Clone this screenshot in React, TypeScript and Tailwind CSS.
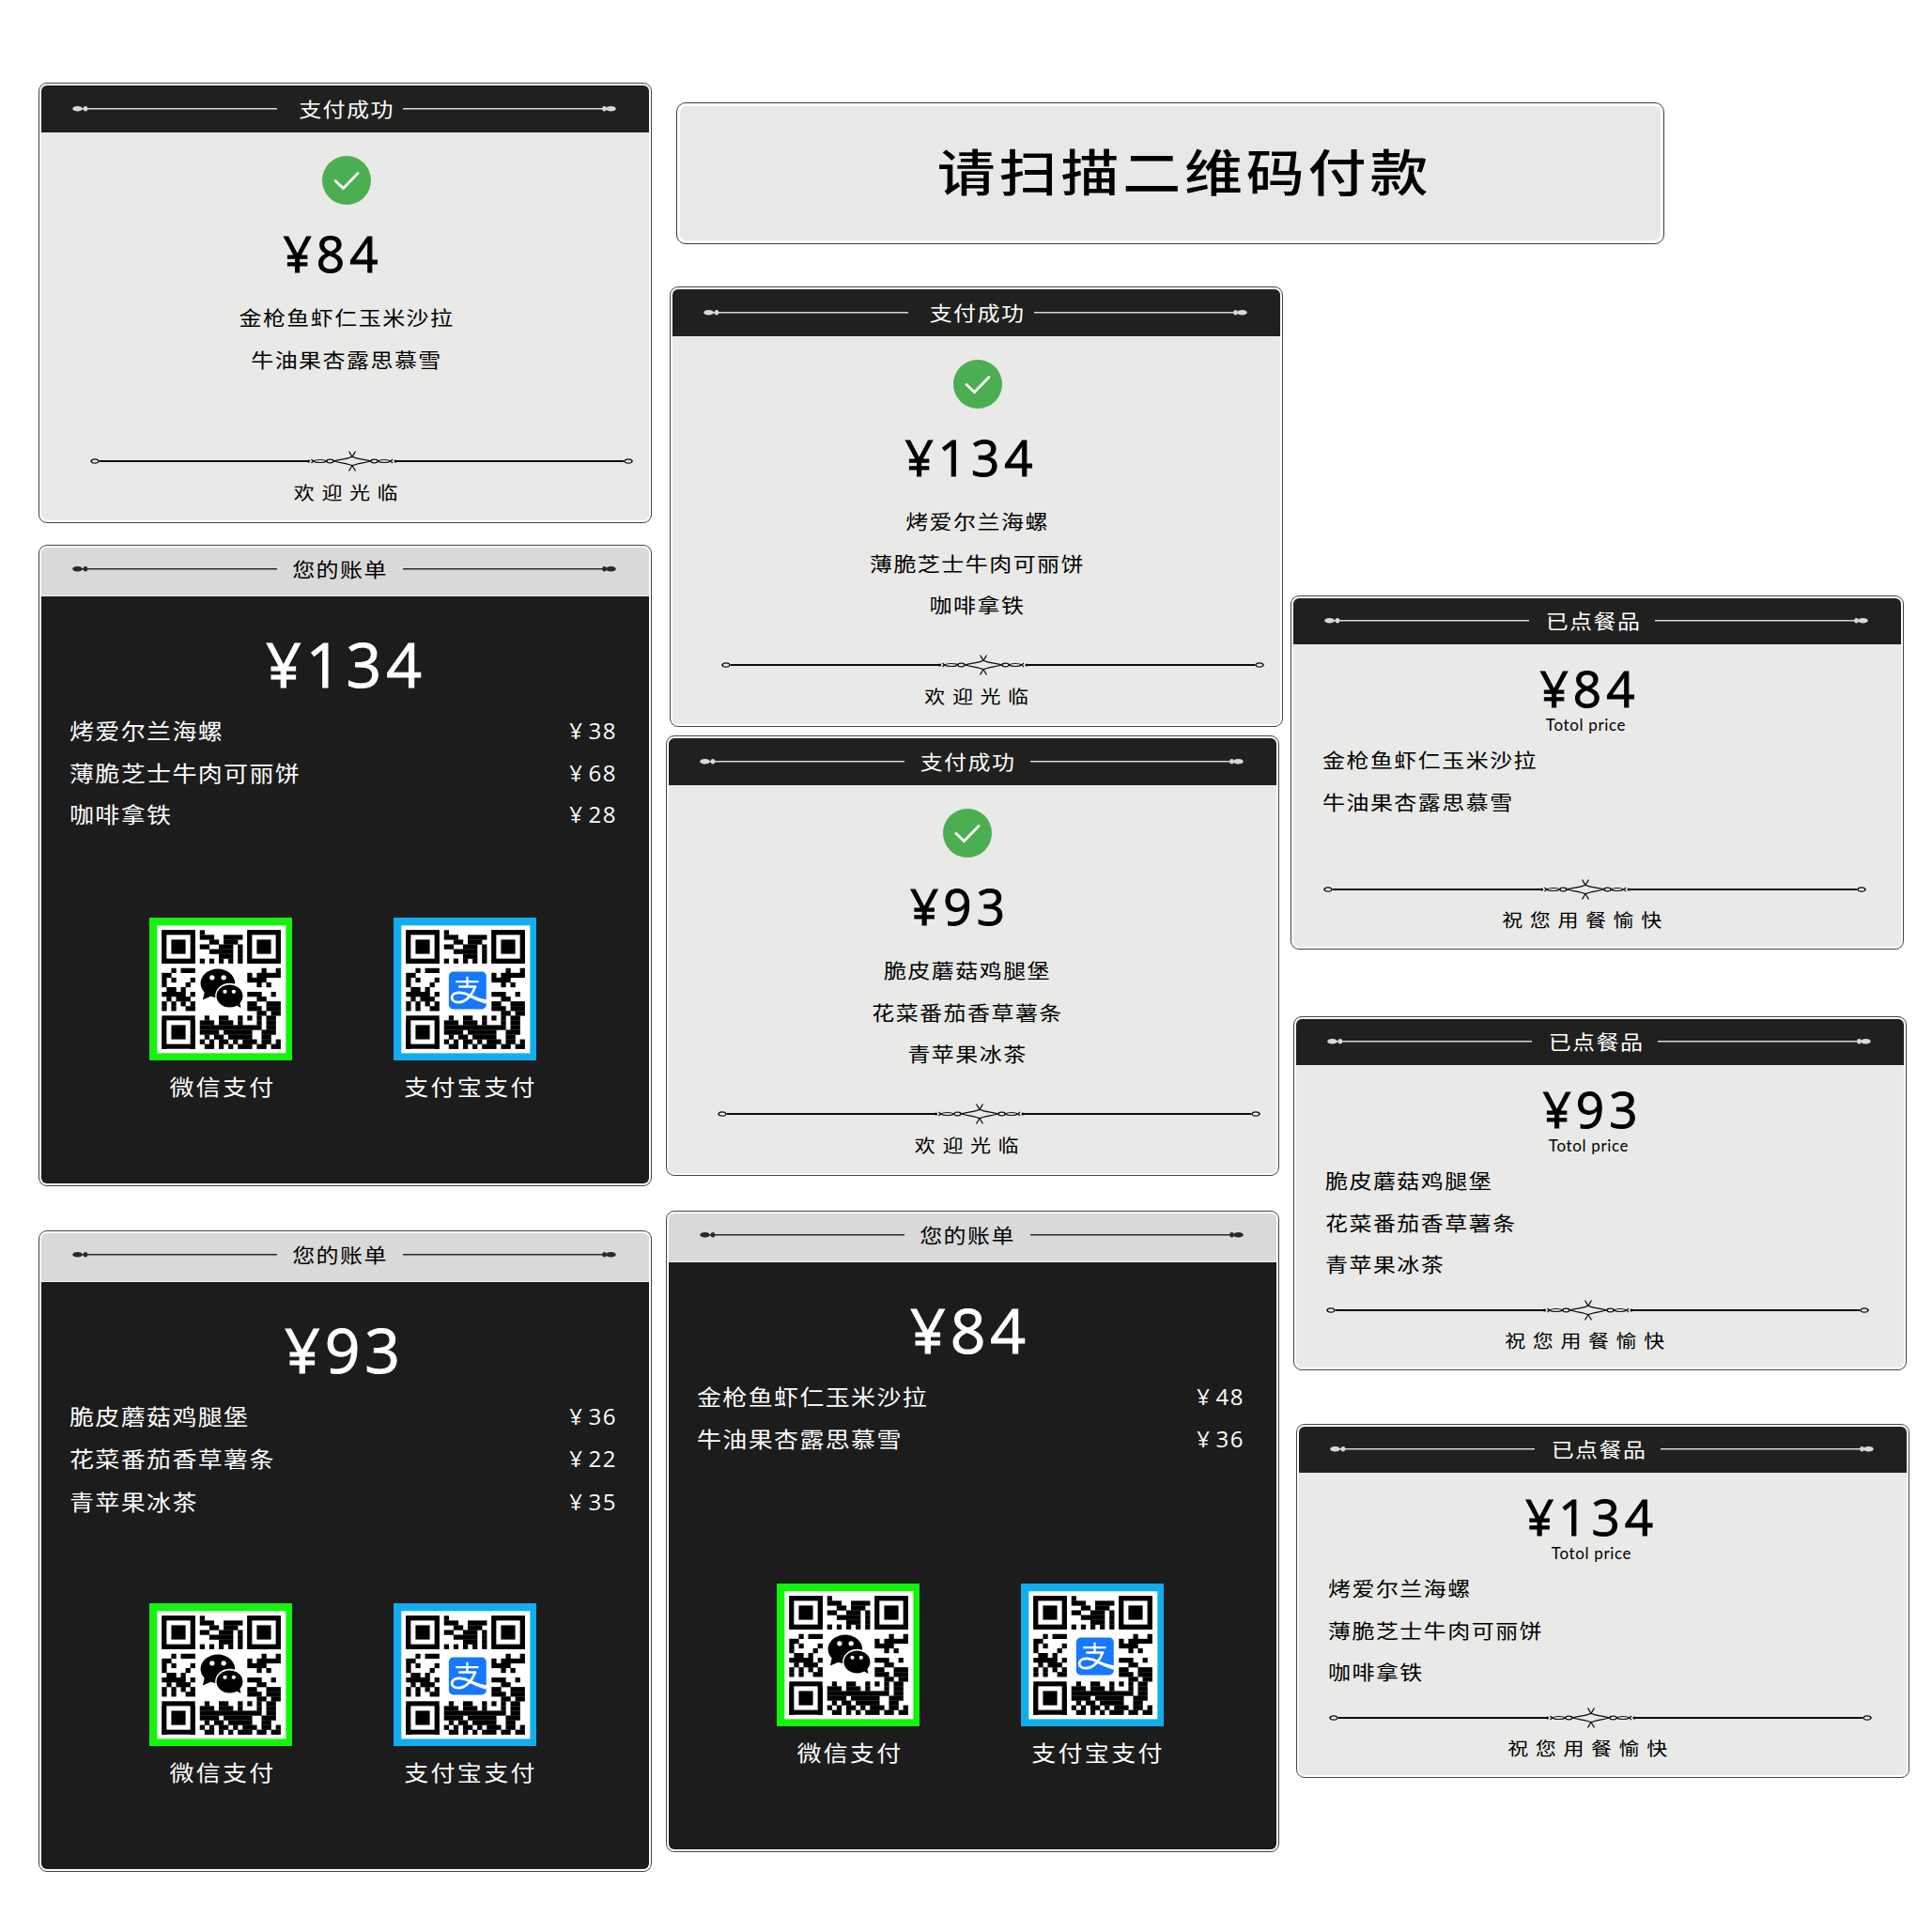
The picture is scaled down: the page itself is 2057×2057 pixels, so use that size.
import React from "react";

const CJK = "font-['Noto_Sans_CJK_SC',sans-serif]";
const NUM = "font-['Open_Sans','Noto_Sans_CJK_SC',sans-serif]";

const QR_ROWS = [
  "1111111010000000001111111",
  "1000001011100111101000001",
  "1011101000110111001011101",
  "1011101011001110101011101",
  "1011101000111110101011101",
  "1000001000001110101000001",
  "1111111010101010101111111",
  "0000000000000000000000000",
  "0010111000000000000001001",
  "1100000000000000001011111",
  "1010001000000000001111000",
  "1000010000000000000010100",
  "0110100000000000000000000",
  "1111101000000000001110010",
  "0101110000000000000011000",
  "1010101000000000001100111",
  "1010011000000000001110111",
  "0000000000000000000011011",
  "0000000001001100101010110",
  "1111111011101110100010110",
  "1000001011111111111110110",
  "1011101011110111111001110",
  "1011101001011011111001100",
  "1011101010101101011101101",
  "1000001001101010111011011",
];

function WeChatMark() {
  return (
    <g>
      <path d="M205 272 L199 298 L226 286 Z" fill="#000" />
      <ellipse cx="247" cy="245" rx="55" ry="46" fill="#000" />
      <circle cx="229" cy="227" r="8" fill="#fff" />
      <circle cx="266" cy="227" r="8" fill="#fff" />
      <ellipse cx="285" cy="286" rx="46" ry="41" fill="#fff" />
      <ellipse cx="285" cy="286" rx="42" ry="36" fill="#000" />
      <path d="M302 312 L321 324 L316 300 Z" fill="#000" />
      <circle cx="270" cy="272" r="6.5" fill="#fff" />
      <circle cx="298" cy="272" r="6.5" fill="#fff" />
    </g>
  );
}

function AlipayMark() {
  return (
    <g>
      <rect x="190" y="196" width="150" height="148" fill="#fff" />
      <rect x="205" y="208" width="120" height="120" rx="14" fill="#1677ff" />
      <g fill="none" stroke="#fff" strokeWidth="7">
        <path d="M227 240 H300 M264 224 V256 M236 256 H293" />
        <path d="M290 255 C282 278 262 306 236 306 C218 306 211 294 217 284 C226 270 252 274 276 286 C294 295 310 300 325 303" strokeWidth="8" />
      </g>
      <path d="M278 284 C294 291 310 295 325 297 V311 C306 306 290 299 272 290 Z" fill="#fff" />
    </g>
  );
}

function QrCode({ kind }: { kind: "wechat" | "alipay" }) {
  const cell = 15.2;
  return (
    <svg viewBox="28 35 457 457" className="block h-[152px] w-[152px]">
      <rect x="28" y="35" width="457" height="457" fill={kind === "wechat" ? "#12f50a" : "#10aeef"} />
      <rect x="53" y="60" width="412" height="409" fill="#fff" />
      {QR_ROWS.map((row, y) =>
        (row.match(/1+|0+/g) || []).reduce<{ x: number; out: React.ReactNode[] }>(
          (acc, run) => {
            if (run[0] === "1") {
              acc.out.push(
                <rect key={`${y}-${acc.x}`} x={68 + acc.x * cell} y={75 + y * cell} width={run.length * cell + 0.6} height={cell + 0.6} fill="#000" />,
              );
            }
            acc.x += run.length;
            return acc;
          },
          { x: 0, out: [] },
        ).out,
      )}
      {/* finder squares */}
      {[
        [0, 0],
        [18, 0],
        [0, 18],
      ].map(([cx, cy]) => (
        <g key={`${cx}-${cy}`}>
          <rect x={68 + cx * cell} y={75 + cy * cell} width={cell * 7} height={cell * 7} fill="#000" />
          <rect x={68 + (cx + 1) * cell} y={75 + (cy + 1) * cell} width={cell * 5} height={cell * 5} fill="#fff" />
          <rect x={68 + (cx + 2) * cell} y={75 + (cy + 2) * cell} width={cell * 3} height={cell * 3} fill="#000" />
        </g>
      ))}
      {kind === "wechat" ? <WeChatMark /> : <AlipayMark />}
    </svg>
  );
}

function Rule({ flip, light, width }: { flip?: boolean; light?: boolean; width: number }) {
  const c = light ? "#d8d8d6" : "#2a2a2a";
  return (
    <svg width={width} height="8" viewBox={`0 0 ${width} 8`} className={flip ? "shrink-0 -scale-x-100" : "shrink-0"}>
      <ellipse cx="5.5" cy="3.7" rx="5.3" ry="2.8" fill={c} />
      <ellipse cx={flip ? 12.5 : 14} cy="3.7" rx="2.3" ry="2.7" fill={c} />
      <rect x="10" y="3" width={width - 10} height="1.5" fill={c} />
    </svg>
  );
}

function Ornament() {
  return (
    <svg width="578" height="28" viewBox="0 0 578 28" fill="none" stroke="#0c0c0c" strokeWidth="1.2">
      <ellipse cx="5" cy="14" rx="3.8" ry="2.2" />
      <path d="M0 14 H1.5 M8.5 14 H12" />
      <path d="M10 14 H233 M325 14 H568" strokeWidth="1.8" />
      <circle cx="232.500" cy="14" r="1" fill="#151515" />
      <circle cx="325" cy="14" r="1" fill="#151515" />
      <path d="M235.500 12 L237.500 14 L235.500 16 M322 12 L320 14 L322 16" />
      <path d="M237 14 C241 12 249 12 252 14 C249 16 241 16 237 14 Z" />
      <ellipse cx="255.500" cy="14" rx="3.600" ry="1.8" />
      <ellipse cx="302.500" cy="14" rx="3.600" ry="1.8" />
      <path d="M306 14 C309 12 317 12 320 14 C317 16 309 16 306 14 Z" />
      <path d="M259 14 C266 12 276 11.500 279 9 C282 11.500 292 12 299 14 C292 16 282 16.500 279 19 C276 16.500 266 16 259 14 Z" />
      <path d="M275.500 3.500 C277 6 278 7.500 279 9.500 C280 7.500 281 6 282.500 3.500 M275.500 24.500 C277 22 278 20.500 279 18.500 C280 20.500 281 22 282.500 24.500" />
      <ellipse cx="573" cy="14" rx="3.800" ry="2.200" />
      <path d="M566 14 H569.500 M576.500 14 H578" />
    </svg>
  );
}

function Frame({ className, children }: { className: string; children: React.ReactNode }) {
  return (
    <section className={`flex w-[653px] shrink-0 flex-col rounded-[9px] border border-[#444444] bg-white p-[2px] ${className}`}>
      <div className="flex flex-1 flex-col overflow-hidden rounded-[6px]">{children}</div>
    </section>
  );
}

function Header({ title, tone, shift = "" }: { title: string; tone: "dark" | "light" | "dish"; shift?: string }) {
  const light = tone === "light";
  const box = light
    ? "h-[52px] border-b border-[#f0f0f0] bg-[#d9d9d9] pb-[5px] text-black"
    : tone === "dark"
      ? "h-[50px] bg-[#20201e] pb-px text-white"
      : "h-[49px] bg-[#20201e] pb-px text-white";
  return (
    <header className={`flex shrink-0 items-center pl-[33px] ${box}`}>
      <Rule width={218} light={!light} />
      <h2 className={`w-[134px] text-center ${shift}`}>
        <span className={`${CJK} block h-[30px] scale-y-[0.87] text-[24px] leading-[28px] font-normal tracking-[1.4px]`}>{title}</span>
      </h2>
      <Rule width={227} flip light={!light} />
    </header>
  );
}

function Dish({ name }: { name: string }) {
  return <li className={`${CJK} h-[44.6px] scale-y-[0.87] text-[24px] leading-[39px] tracking-[1.45px] whitespace-nowrap`}>{name}</li>;
}

type SuccessProps = { amount: string; dishes: string[]; className: string; inset: string; priceInset: string; titleShift?: string };

function SuccessCard({ amount, dishes, className, inset, priceInset, titleShift }: SuccessProps) {
  return (
    <Frame className={`h-[469px] ${className}`}>
      <Header title="支付成功" tone="dark" shift={titleShift} />
      <div className="flex flex-1 flex-col bg-[#e9e9e7] text-black">
        <div className={`mt-[25px] flex justify-center ${inset}`}>
          <svg width="52" height="52" viewBox="0 0 52 52">
            <circle cx="26" cy="26" r="26" fill="#4bae50" />
            <path d="M14 26.500 L22.500 34.500 L38 18.500" fill="none" stroke="#fff" strokeWidth="2.800" strokeLinecap="round" />
          </svg>
        </div>
        <p className={`${NUM} mt-[22px] h-[60px] text-center text-[53px] leading-[59px] tracking-[5px] [-webkit-text-stroke:1px_black] ${priceInset}`}>¥{amount}</p>
        <ul className={`mt-[17px] h-[135px] text-center ${inset}`}>
          {dishes.map((d) => (
            <Dish key={d} name={d} />
          ))}
        </ul>
        <div className="mt-[25px] ml-[52px]">
          <Ornament />
        </div>
        <p className={`${CJK} mt-[6px] h-[24px] scale-y-[0.87] text-center text-[22px] leading-[24px] tracking-[7.6px] ${inset}`}>
          <span className="-mr-[6px]">欢迎光临</span>
        </p>
      </div>
    </Frame>
  );
}

type BillProps = { amount: string; rows: [string, string][]; className: string; priceInset: string; lastRow?: string };

function BillCard({ amount, rows, className, priceInset, lastRow = "" }: BillProps) {
  return (
    <Frame className={`h-[683px] ${className}`}>
      <Header title="您的账单" tone="light" />
      <div className="flex flex-1 flex-col bg-[#1c1c1c] text-white">
        <p className={`${NUM} mt-[37px] h-[70px] text-center text-[66px] leading-[68px] tracking-[5px] [-webkit-text-stroke:1px_white] ${priceInset}`}>¥{amount}</p>
        <ul className={`mt-[14px] h-[134px] pr-[34px] pl-[30px] ${lastRow}`}>
          {rows.map(([name, price]) => (
            <li key={name} className="flex h-[44.6px] items-center justify-between">
              <span className={`${CJK} scale-y-[0.86] text-[26px] leading-[42px] tracking-[1.35px]`}>{name}</span>
              <span className={`${NUM} flex gap-[5px] text-[24px] leading-[40px] tracking-[1.5px]`}>
                <span>¥</span>
                <span>{price}</span>
              </span>
            </li>
          ))}
        </ul>
        <div className={`${CJK} mt-[87px] flex gap-[108px] pl-[115px] text-[26px] leading-[30px] tracking-[2.3px]`}>
          <figure className="flex w-[152px] flex-col items-center">
            <QrCode kind="wechat" />
            <figcaption className="mt-[13px] scale-y-[0.86] pl-[4px] whitespace-nowrap">微信支付</figcaption>
          </figure>
          <figure className="flex w-[152px] flex-col items-center">
            <QrCode kind="alipay" />
            <figcaption className="mt-[13px] scale-y-[0.86] pl-[12px] whitespace-nowrap">支付宝支付</figcaption>
          </figure>
        </div>
      </div>
    </Frame>
  );
}

type OrderProps = { amount: string; dishes: string[]; className: string; priceInset: string };

function OrderCard({ amount, dishes, className, priceInset }: OrderProps) {
  return (
    <Frame className={`h-[377px] ${className}`}>
      <Header title="已点餐品" tone="dish" shift="pl-[3px]" />
      <div className="flex flex-1 flex-col bg-[#e9e9e7] text-black">
        <p className={`${NUM} mt-[22px] h-[50px] text-center text-[53px] leading-[49px] tracking-[5px] [-webkit-text-stroke:1px_black] ${priceInset}`}>¥{amount}</p>
        <p className="mt-[4px] h-[20px] pr-[24px] text-center font-['Lato',sans-serif] text-[17px] leading-[20px] tracking-[0.65px]">Totol price</p>
        <ul className="mt-[6px] h-[134px] pl-[31px]">
          {dishes.map((d) => (
            <Dish key={d} name={d} />
          ))}
        </ul>
        <div className="mt-[11px] ml-[32px]">
          <Ornament />
        </div>
        <p className={`${CJK} mt-[5px] h-[24px] scale-y-[0.87] pr-[25px] text-center text-[22px] leading-[24px] tracking-[7.6px]`}>祝您用餐愉快</p>
      </div>
    </Frame>
  );
}

const SALAD = ["金枪鱼虾仁玉米沙拉", "牛油果杏露思慕雪"];
const CREPE = ["烤爱尔兰海螺", "薄脆芝士牛肉可丽饼", "咖啡拿铁"];
const BURGER = ["脆皮蘑菇鸡腿堡", "花菜番茄香草薯条", "青苹果冰茶"];

export default function App() {
  return (
    <main className="flex h-[2057px] w-[2057px] items-start overflow-hidden bg-white pl-[41px]">
      <div className="flex flex-col pt-[88px]">
        <SuccessCard amount="84" dishes={SALAD} className="" inset="pl-[3px]" priceInset="pr-[26px]" titleShift="pl-[14px]" />
        <BillCard
          amount="134"
          rows={[
            [CREPE[0], "38"],
            [CREPE[1], "68"],
            [CREPE[2], "28"],
          ]}
          className="mt-[23px]"
          priceInset="pl-[2px]"
        />
        <BillCard
          amount="93"
          rows={[
            [BURGER[0], "36"],
            [BURGER[1], "22"],
            [BURGER[2], "35"],
          ]}
          className="mt-[47px]"
          priceInset="pr-[1px]"
          lastRow="[&>li:last-child]:pt-[4px]"
        />
      </div>
      <div className="flex flex-col pt-[109px]">
        <section className="ml-[26px] h-[151px] w-[1052px] rounded-[10px] border border-[#3c3c3c] bg-white p-[3px]">
          <div className="flex h-full items-center justify-center rounded-[7px] bg-[#e8e8e6] pb-[8px] pl-[30px]">
            <h1 className={`${CJK} scale-y-[0.86] text-[62px] leading-[70px] font-medium tracking-[3.8px] text-black`}>请扫描二维码付款</h1>
          </div>
        </section>
        <div className="mt-[45px] flex items-start">
          <div className="flex w-[671px] flex-col pl-[15px]">
            <SuccessCard amount="134" dishes={CREPE} className="ml-[3.500px]" inset="pl-[3px]" priceInset="pr-[10px]" titleShift="pl-[14px]" />
            <SuccessCard amount="93" dishes={BURGER} className="mt-[9px]" inset="pr-[11px]" priceInset="pr-[27px]" titleShift="pl-[1px]" />
            <BillCard
              amount="84"
              rows={[
                [SALAD[0], "48"],
                [SALAD[1], "36"],
              ]}
              className="mt-[37px]"
              priceInset="pr-[5px]"
            />
          </div>
          <div className="flex flex-col pt-[329px]">
            <OrderCard amount="84" dishes={SALAD} className="ml-[9px]" priceInset="pr-[16px]" />
            <OrderCard amount="93" dishes={BURGER} className="mt-[71px] ml-[12px]" priceInset="pr-[16px]" />
            <OrderCard amount="134" dishes={CREPE} className="mt-[57px] ml-[15px]" priceInset="pr-[24px]" />
          </div>
        </div>
      </div>
    </main>
  );
}
